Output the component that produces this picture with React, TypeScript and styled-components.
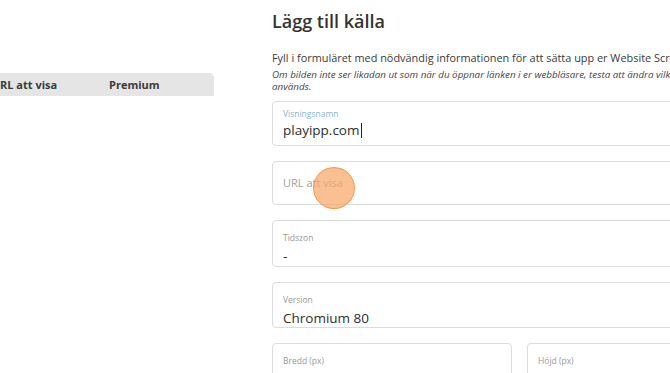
import * as React from "react";
import styled, { createGlobalStyle } from "styled-components";

const GlobalStyle = createGlobalStyle`
  html, body {
    margin: 0;
    padding: 0;
    background: #ffffff;
    overflow: hidden;
  }
  body {
    font-family: "Open Sans", "Noto Sans", sans-serif;
    color: #333333;
  }
`;

const Page = styled.div`
  display: flex;
  width: 670px;
  height: 373px;
  overflow: hidden;
`;

const ListPane = styled.section`
  width: 214px;
  flex-shrink: 0;
  padding-top: 73px;
`;

const TableHead = styled.div`
  display: flex;
  align-items: center;
  height: 23px;
  background: #e5e5e5;
  border-top-right-radius: 5px;
  font-size: 11px;
  font-weight: 700;
  color: #3a3a3a;
`;

const HeadCell = styled.div<{ $width: number }>`
  width: ${(p) => p.$width}px;
  white-space: nowrap;
  overflow: hidden;
`;

const FormPane = styled.section`
  width: 495px;
  flex-shrink: 0;
  margin-left: 58px;
  padding-top: 9px;
`;

const Title = styled.h1`
  margin: 0;
  font-size: 18px;
  font-weight: 600;
  line-height: 24px;
  color: #333333;
`;

const Lead = styled.p`
  margin: 18px 0 0;
  font-size: 10.9px;
  line-height: 14px;
  white-space: nowrap;
  color: #3a3a3a;
`;

const Note = styled.p`
  margin: 4px 0 0;
  font-size: 9.8px;
  font-style: italic;
  line-height: 11.5px;
  white-space: nowrap;
  color: #444444;
`;

const Fields = styled.div`
  display: flex;
  flex-direction: column;
  gap: 15px;
  margin-top: 9px;
`;

const Pair = styled.div`
  display: grid;
  grid-template-columns: 1fr 1fr;
  gap: 15px;
`;

const Box = styled.div<{ $top: number; $height: number }>`
  position: relative;
  box-sizing: border-box;
  height: ${(p) => p.$height}px;
  padding: ${(p) => p.$top}px 10px 0;
  border: 1px solid #dcdcdc;
  border-radius: 4px;
  background: #ffffff;
`;

const Label = styled.div<{ $focused?: boolean }>`
  font-size: 8.5px;
  line-height: 11px;
  color: ${(p) => (p.$focused ? "#86b6d3" : "#9a9a9a")};
`;

const Value = styled.div<{ $muted?: boolean; $gap?: number }>`
  display: flex;
  align-items: center;
  font-size: 13.5px;
  line-height: 20px;
  margin-top: ${(p) => p.$gap ?? 3}px;
  color: ${(p) => (p.$muted ? "#d2d2d2" : "#2e2e2e")};
`;

const Caret = styled.span`
  display: inline-block;
  width: 1px;
  height: 15px;
  background: #222222;
  margin-left: 1px;
`;

const Placeholder = styled.div`
  font-size: 11px;
  line-height: 16px;
  color: #a0a0a0;
`;

const Touch = styled.div`
  position: absolute;
  left: 40px;
  top: 5px;
  width: 40px;
  height: 40px;
  border-radius: 50%;
  background: rgba(248, 168, 104, 0.72);
  border: 1.5px solid rgba(240, 148, 70, 0.9);
`;

export default function App() {
  return (
    <Page>
      <GlobalStyle />
      <ListPane>
        <TableHead>
          <HeadCell $width={109}>RL att visa</HeadCell>
          <HeadCell $width={100}>Premium</HeadCell>
        </TableHead>
      </ListPane>
      <FormPane>
        <Title>Lägg till källa</Title>
        <Lead>
          Fyll i formuläret med nödvändig informationen för att sätta upp er Website Screenshot-källa.
        </Lead>
        <Note>
          Om bilden inte ser likadan ut som när du öppnar länken i er webbläsare, testa att ändra vilken
          version som
          <br />
          används.
        </Note>
        <Fields>
          <Box $top={6} $height={45}>
            <Label $focused>Visningsnamn</Label>
            <Value $gap={1}>
              playipp.com
              <Caret />
            </Value>
          </Box>
          <Box $top={13} $height={44}>
            <Placeholder>URL att visa</Placeholder>
            <Touch />
          </Box>
          <Box $top={11} $height={47}>
            <Label>Tidszon</Label>
            <Value>-</Value>
          </Box>
          <Box $top={11} $height={46}>
            <Label>Version</Label>
            <Value>Chromium 80</Value>
          </Box>
          <Pair>
            <Box $top={11} $height={46}>
              <Label>Bredd (px)</Label>
              <Value $muted>1920</Value>
            </Box>
            <Box $top={11} $height={46}>
              <Label>Höjd (px)</Label>
              <Value $muted>1080</Value>
            </Box>
          </Pair>
        </Fields>
      </FormPane>
    </Page>
  );
}
